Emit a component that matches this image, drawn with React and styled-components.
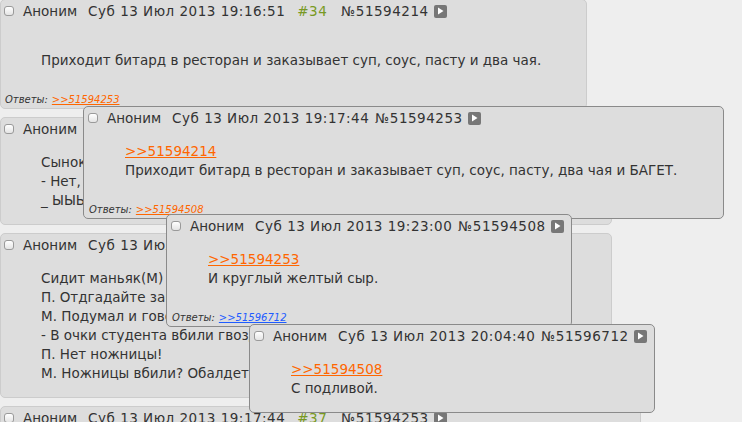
import React from 'react';
import styled, { createGlobalStyle } from 'styled-components';

const GlobalStyle = createGlobalStyle`
  html, body {
    margin: 0;
    padding: 0;
    background: #eeeeee;
    overflow: hidden;
  }
  body {
    font-family: "DejaVu Sans", Verdana, sans-serif;
    font-size: 13.5px;
    color: #333333;
  }
`;

const Page = styled.div`
  position: relative;
  width: 742px;
  height: 422px;
  overflow: hidden;
`;

const Thread = styled.div`
  display: flex;
  flex-direction: column;
  align-items: flex-start;
  gap: 8px;
  margin-top: -1px;
`;

const Post = styled.div`
  box-sizing: border-box;
  width: ${({ $width }) => $width}px;
  background: #dddddd;
  border: 1px solid #cccccc;
  border-radius: 5px;
  padding: 1px 0 1px 3px;
`;

const Popup = styled.div`
  position: absolute;
  box-sizing: border-box;
  left: ${({ $left }) => $left}px;
  top: ${({ $top }) => $top}px;
  width: ${({ $width }) => $width}px;
  background: #dddddd;
  border: 1px solid #8a8a8a;
  border-radius: 5px;
  padding: 1px 0 1px 4px;
`;

const Header = styled.div`
  display: flex;
  align-items: center;
  height: 20px;
  white-space: nowrap;
`;

const Check = styled.input.attrs({ type: 'checkbox' })`
  appearance: none;
  box-sizing: border-box;
  width: 10px;
  height: 10px;
  margin: 0 9px 0 0;
  border: 1px solid #9a9a9a;
  border-radius: 3px;
  background: linear-gradient(#ffffff, #e4e4e4);
`;

const Name = styled.span`
  margin-right: 11px;
`;

const Date = styled.span`
  letter-spacing: 0.5px;
  margin-right: ${({ $popup }) => ($popup ? 6 : 12)}px;
`;

const Index = styled.span`
  color: #789922;
  letter-spacing: 0.5px;
  margin-right: 14px;
`;

const Num = styled.span`
  letter-spacing: 0.5px;
  margin-right: 5px;
`;

const PlayIcon = styled.span`
  display: inline-flex;
  align-items: center;
  justify-content: center;
  width: 13px;
  height: 13px;
  border-radius: 2px;
  background: #777777;
`;

const Message = styled.div`
  margin: ${({ $top }) => $top}px 40px 13px 37px;
  line-height: 19px;
  white-space: nowrap;
`;

const RefLink = styled.a`
  color: #ff6600;
  text-decoration: underline;
`;

const Replies = styled.div`
  font-size: 10px;
  font-style: italic;
  line-height: 14px;
  margin: 23px 0 0 1px;
  color: #333333;
  a {
    margin-left: 4px;
    color: ${({ $blue }) => ($blue ? '#1f5cff' : '#ff6600')};
    text-decoration: underline;
  }
`;

const Play = () => (
  <PlayIcon>
    <svg width="7" height="8" viewBox="0 0 7 8">
      <path d="M1 0.5 L6.5 4 L1 7.5 Z" fill="#ffffff" />
    </svg>
  </PlayIcon>
);

const PostHeader = ({ date, index, num, popup }) => (
  <Header>
    <Check />
    <Name>Аноним</Name>
    <Date $popup={popup}>Суб 13 Июл 2013 {date}</Date>
    {index && <Index>#{index}</Index>}
    <Num>№{num}</Num>
    <Play />
  </Header>
);

const App = () => (
  <Page>
    <GlobalStyle />
    <Thread>
      <Post $width={587}>
        <PostHeader date="19:16:51" index="34" num="51594214" />
        <Message $top={30}>
          Приходит битард в ресторан и заказывает суп, соус, пасту и два чая.
        </Message>
        <Replies>
          Ответы:<a>&gt;&gt;51594253</a>
        </Replies>
      </Post>
      <Post $width={612}>
        <PostHeader date="19:17:02" index="35" num="51594240" />
        <Message $top={14}>
          Сынок, ты опять всю ночь сидел за компьютером?<br />
          - Нет, папа, я только что встал.<br />
          _ ЫЫЫЫЫЫЫЫЫЫ
        </Message>
      </Post>
      <Post $width={612}>
        <PostHeader date="19:17:09" index="36" num="51594301" />
        <Message $top={14}>
          Сидит маньяк(М) в психушке, приходит психиатр(П).<br />
          П. Отдгадайте загадку: два кольца, два конца.<br />
          М. Подумал и говорит:<br />
          - В очки студента вбили гвоздь?<br />
          П. Нет ножницы!<br />
          М. Ножницы вбили? Обалдеть!
        </Message>
      </Post>
      <Post $width={641}>
        <PostHeader date="19:17:44" index="37" num="51594253" />
        <Message $top={14}>
          Приходит битард в ресторан и заказывает суп, соус, пасту, два чая и БАГЕТ.
        </Message>
      </Post>
    </Thread>

    <Popup $left={83} $top={106} $width={641}>
      <PostHeader date="19:17:44" num="51594253" popup />
      <Message $top={14}>
        <RefLink>&gt;&gt;51594214</RefLink>
        <br />
        Приходит битард в ресторан и заказывает суп, соус, пасту, два чая и БАГЕТ.
      </Message>
      <Replies>
        Ответы:<a>&gt;&gt;51594508</a>
      </Replies>
    </Popup>

    <Popup $left={166} $top={214} $width={406}>
      <PostHeader date="19:23:00" num="51594508" popup />
      <Message $top={14}>
        <RefLink>&gt;&gt;51594253</RefLink>
        <br />
        И круглый желтый сыр.
      </Message>
      <Replies $blue>
        Ответы:<a>&gt;&gt;51596712</a>
      </Replies>
    </Popup>

    <Popup $left={249} $top={324} $width={406}>
      <PostHeader date="20:04:40" num="51596712" popup />
      <Message $top={14}>
        <RefLink>&gt;&gt;51594508</RefLink>
        <br />
        С подливой.
      </Message>
    </Popup>
  </Page>
);

export default App;
